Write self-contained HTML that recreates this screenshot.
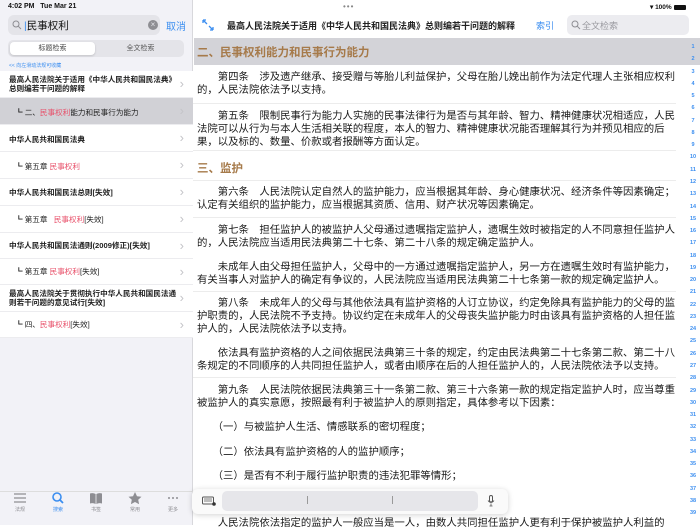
<!DOCTYPE html>
<html><head><meta charset="utf-8">
<style>
*{margin:0;padding:0;box-sizing:border-box}
body{width:700px;height:525px;overflow:hidden;position:relative;background:#fff;font-family:"Liberation Sans","Noto Sans CJK SC",sans-serif;color:#111}
.a{position:absolute;white-space:nowrap}
#left{position:absolute;left:0;top:0;width:193px;height:525px;background:#f2f2f7;border-right:1px solid #d8d8dc}
.item{position:absolute;left:0;width:193px;background:#fff;border-bottom:1px solid #ececef;font-size:7.6px;font-weight:bold;color:#222}
.item .t{position:absolute;left:9px}
.item .sub{font-weight:normal;left:15px}
.chev{position:absolute;right:9px;color:#c4c4c8;font-size:13px;font-weight:normal}
.r{color:#e8506a}
.txt{font-size:10.4px;color:#1a1a1a;left:197px;font-family:"Noto Sans CJK SC",sans-serif}
.sep{position:absolute;left:193px;width:483px;height:1px;background:#ececec}
.idx{position:absolute;left:686px;width:14px;text-align:center;font-size:5.5px;color:#3b8ef0;font-weight:bold}
.tab{position:absolute;top:492px;width:40px;text-align:center;font-size:5px;color:#8e8e93}
.hd{font-size:11.5px;font-weight:bold;color:#a67a4a;font-family:'Noto Sans CJK SC',sans-serif}
</style></head><body>

<div id="left">
  <div class="a" style="left:8px;top:3px;font-size:7px;font-weight:bold">4:02 PM&nbsp;&nbsp; Tue Mar 21</div>
  <div class="a" style="left:8px;top:15px;width:152px;height:20px;background:#e4e4e9;border-radius:6px"></div>
  <svg class="a" style="left:12px;top:20px" width="10" height="10" viewBox="0 0 10 10"><circle cx="4" cy="4" r="3" fill="none" stroke="#8e8e93" stroke-width="1"/><line x1="6.2" y1="6.2" x2="9" y2="9" stroke="#8e8e93" stroke-width="1"/></svg>
  <div class="a" style="left:24px;top:18px;font-size:10.5px;color:#111"><span style="color:#3b8ef0">|</span>民事权利</div>
  <div class="a" style="left:148px;top:20px;width:10px;height:10px;border-radius:50%;background:#8e8e93;color:#e4e4e9;font-size:8px;line-height:10px;text-align:center">×</div>
  <div class="a" style="left:166px;top:18px;font-size:10px;color:#3b8ef0">取消</div>
  <div class="a" style="left:8px;top:40px;width:176px;height:17px;background:#e4e4e9;border-radius:5px"></div>
  <div class="a" style="left:10px;top:42px;width:85px;height:13px;background:#fff;border-radius:4px;box-shadow:0 1px 2px rgba(0,0,0,.15);font-size:7px;text-align:center;line-height:13px;color:#444">标题检索</div>
  <div class="a" style="left:98px;top:42px;width:85px;height:13px;font-size:7px;text-align:center;line-height:13px;color:#555">全文检索</div>
  <div class="a" style="left:9px;top:62px;font-size:5px;color:#3b8ef0">&lt;&lt; 向左滑动法规可收藏</div>
  <div class="item" style="top:71px;height:27px"><div class="t" style="top:4px;line-height:9px">最高人民法院关于适用《中华人民共和国民法典》<br>总则编若干问题的解释</div><span class="chev" style="top:5px">›</span></div>
  <div class="item" style="top:98px;height:27px;background:#d1d1d6"><div class="t sub" style="top:9px">┗ 二、<span class="r">民事权利</span>能力和民事行为能力</div><span class="chev" style="top:5px">›</span></div>
  <div class="item" style="top:125px;height:27px"><div class="t" style="top:9px">中华人民共和国民法典</div><span class="chev" style="top:5px">›</span></div>
  <div class="item" style="top:152px;height:27px"><div class="t sub" style="top:9px">┗ 第五章 <span class="r">民事权利</span></div><span class="chev" style="top:5px">›</span></div>
  <div class="item" style="top:179px;height:27px"><div class="t" style="top:8px">中华人民共和国民法总则[失效]</div><span class="chev" style="top:5px">›</span></div>
  <div class="item" style="top:206px;height:27px"><div class="t sub" style="top:8px">┗ 第五章&nbsp;&nbsp; <span class="r">民事权利</span>[失效]</div><span class="chev" style="top:5px">›</span></div>
  <div class="item" style="top:233px;height:26px"><div class="t" style="top:7px">中华人民共和国民法通则(2009修正)[失效]</div><span class="chev" style="top:5px">›</span></div>
  <div class="item" style="top:259px;height:26px"><div class="t sub" style="top:7px">┗ 第五章 <span class="r">民事权利</span>[失效]</div><span class="chev" style="top:5px">›</span></div>
  <div class="item" style="top:285px;height:27px"><div class="t" style="top:4px;line-height:9px">最高人民法院关于贯彻执行中华人民共和国民法通<br>则若干问题的意见试行[失效]</div><span class="chev" style="top:5px">›</span></div>
  <div class="item" style="top:312px;height:26px"><div class="t sub" style="top:7px">┗ 四、<span class="r">民事权利</span>[失效]</div><span class="chev" style="top:5px">›</span></div>
  <div class="a" style="left:0;top:491px;width:193px;height:1px;background:#ddd"></div>
  <div class="tab" style="left:0"><svg width="14" height="12" viewBox="0 0 14 12"><path d="M1 2h12M1 6h12M1 10h12" stroke="#8e8e93" stroke-width="1.2"/></svg><br>法规</div>
  <div class="tab" style="left:38px;color:#3b8ef0"><svg width="14" height="12" viewBox="0 0 14 12"><circle cx="6" cy="5" r="4" fill="none" stroke="#3b8ef0" stroke-width="1.6"/><line x1="9" y1="8" x2="12" y2="11" stroke="#3b8ef0" stroke-width="1.8"/></svg><br>搜索</div>
  <div class="tab" style="left:76px"><svg width="14" height="12" viewBox="0 0 14 12"><path d="M1 1.5q3-1 5.6 0.5v10q-2.6-1.5-5.6-0.5zM13 1.5q-3-1-5.6 0.5v10q2.6-1.5 5.6-0.5z" fill="#8e8e93"/></svg><br>书签</div>
  <div class="tab" style="left:115px"><svg width="14" height="12" viewBox="0 0 14 12"><path d="M7 0l2 4.2 4.5.5-3.3 3 .9 4.5L7 10 2.9 12.2l.9-4.5-3.3-3 4.5-.5z" fill="#8e8e93"/></svg><br>常用</div>
  <div class="tab" style="left:153px"><svg width="14" height="12" viewBox="0 0 14 12"><circle cx="3" cy="6" r="1" fill="#8e8e93"/><circle cx="7" cy="6" r="1" fill="#8e8e93"/><circle cx="11" cy="6" r="1" fill="#8e8e93"/></svg><br>更多</div>
</div>

<div class="a" style="left:343px;top:2px;font-size:8px;color:#888;letter-spacing:1px">•••</div>
<div class="a" style="left:650px;top:3px;font-size:6.5px;font-weight:bold">▾ 100% <span style="display:inline-block;width:12px;height:5px;background:#111;border-radius:1px;vertical-align:middle"></span></div>
<svg class="a" style="left:202px;top:19px" width="12" height="12" viewBox="0 0 12 12"><path d="M1 1l4 4M1 1h3M1 1v3M11 11l-4-4M11 11h-3M11 11v-3" stroke="#3b8ef0" stroke-width="1.3" fill="none"/></svg>
<div class="a" style="left:227px;top:19px;font-size:9px;font-weight:bold;color:#222">最高人民法院关于适用《中华人民共和国民法典》总则编若干问题的解释</div>
<div class="a" style="left:536px;top:19px;font-size:9px;color:#3b8ef0">索引</div>
<div class="a" style="left:567px;top:15px;width:122px;height:20px;background:#ececf0;border-radius:5px"></div>
<svg class="a" style="left:571px;top:20px" width="10" height="10" viewBox="0 0 10 10"><circle cx="4" cy="4" r="3" fill="none" stroke="#8e8e93" stroke-width="1"/><line x1="6.2" y1="6.2" x2="9" y2="9" stroke="#8e8e93" stroke-width="1"/></svg>
<div class="a" style="left:582px;top:19px;font-size:9px;color:#9a9aa0">全文检索</div>

<div class="a" style="left:194px;top:38px;width:506px;height:27px;background:#d3d3d8"></div>
<div class="a hd" style="left:197px;top:44px">二、民事权利能力和民事行为能力</div>

<div class="a txt" style="top:69px;line-height:13px">　　第四条　涉及遗产继承、接受赠与等胎儿利益保护，父母在胎儿娩出前作为法定代理人主张相应权利<br>的，人民法院依法予以支持。</div>
<div class="sep" style="top:103px"></div>
<div class="a txt" style="top:108px;line-height:13px">　　第五条　限制民事行为能力人实施的民事法律行为是否与其年龄、智力、精神健康状况相适应，人民<br>法院可以从行为与本人生活相关联的程度，本人的智力、精神健康状况能否理解其行为并预见相应的后<br>果，以及标的、数量、价款或者报酬等方面认定。</div>
<div class="sep" style="top:150px"></div>
<div class="a hd" style="left:197px;top:160px">三、监护</div>
<div class="sep" style="top:180px"></div>
<div class="a txt" style="top:184px;line-height:13px">　　第六条　人民法院认定自然人的监护能力，应当根据其年龄、身心健康状况、经济条件等因素确定；<br>认定有关组织的监护能力，应当根据其资质、信用、财产状况等因素确定。</div>
<div class="sep" style="top:217px"></div>
<div class="a txt" style="top:222px;line-height:13px">　　第七条　担任监护人的被监护人父母通过遗嘱指定监护人，遗嘱生效时被指定的人不同意担任监护人<br>的，人民法院应当适用民法典第二十七条、第二十八条的规定确定监护人。</div>
<div class="a txt" style="top:259px;line-height:13px">　　未成年人由父母担任监护人，父母中的一方通过遗嘱指定监护人，另一方在遗嘱生效时有监护能力，<br>有关当事人对监护人的确定有争议的，人民法院应当适用民法典第二十七条第一款的规定确定监护人。</div>
<div class="sep" style="top:291px"></div>
<div class="a txt" style="top:295px;line-height:13px">　　第八条　未成年人的父母与其他依法具有监护资格的人订立协议，约定免除具有监护能力的父母的监<br>护职责的，人民法院不予支持。协议约定在未成年人的父母丧失监护能力时由该具有监护资格的人担任监<br>护人的，人民法院依法予以支持。</div>
<div class="a txt" style="top:345px;line-height:13px">　　依法具有监护资格的人之间依据民法典第三十条的规定，约定由民法典第二十七条第二款、第二十八<br>条规定的不同顺序的人共同担任监护人，或者由顺序在后的人担任监护人的，人民法院依法予以支持。</div>
<div class="sep" style="top:377px"></div>
<div class="a txt" style="top:382px;line-height:13px">　　第九条　人民法院依据民法典第三十一条第二款、第三十六条第一款的规定指定监护人时，应当尊重<br>被监护人的真实意愿，按照最有利于被监护人的原则指定，具体参考以下因素：</div>
<div class="a txt" style="top:418px">　　（一）与被监护人生活、情感联系的密切程度；</div>
<div class="a txt" style="top:443px">　　（二）依法具有监护资格的人的监护顺序；</div>
<div class="a txt" style="top:467px">　　（三）是否有不利于履行监护职责的违法犯罪等情形；</div>
<div class="a txt" style="top:514px">　　人民法院依法指定的监护人一般应当是一人，由数人共同担任监护人更有利于保护被监护人利益的</div>

<div class="a" style="left:686px;top:38px;width:14px;height:487px;background:#fff"></div>
<div class="a" style="left:686px;top:38px;width:14px;height:27px;background:#d3d3d8"></div>
<div id="idx"></div>
<script>
var h='';for(var i=1;i<=39;i++){h+='<div class="idx" style="top:'+(44+(i-1)*12.27)+'px">'+i+'</div>';}
document.getElementById('idx').innerHTML=h;
</script>

<div class="a" style="left:192px;top:489px;width:316px;height:25px;background:#fafafa;border-radius:6px;box-shadow:0 1px 6px rgba(0,0,0,.18)"></div>
<svg class="a" style="left:202px;top:496px" width="14" height="10" viewBox="0 0 14 10"><rect x="0.5" y="1" width="11" height="7" rx="1" fill="none" stroke="#555"/><path d="M2 3h8M2 5h8" stroke="#555" stroke-width=".8"/><circle cx="12" cy="8" r="1.8" fill="#333"/></svg>
<div class="a" style="left:222px;top:491px;width:256px;height:20px;background:#e6e6ea;border-radius:5px"></div>
<div class="a" style="left:307px;top:496px;width:1px;height:8px;background:#999"></div>
<div class="a" style="left:392px;top:496px;width:1px;height:8px;background:#999"></div>
<svg class="a" style="left:487px;top:495px" width="8" height="12" viewBox="0 0 8 12"><rect x="2.5" y="0.5" width="3" height="6.5" rx="1.5" fill="none" stroke="#555"/><path d="M1 5.5q3 4 6 0M4 8.5v2.5M2.5 11h3" stroke="#555" fill="none" stroke-width=".8"/></svg>
</body></html>
